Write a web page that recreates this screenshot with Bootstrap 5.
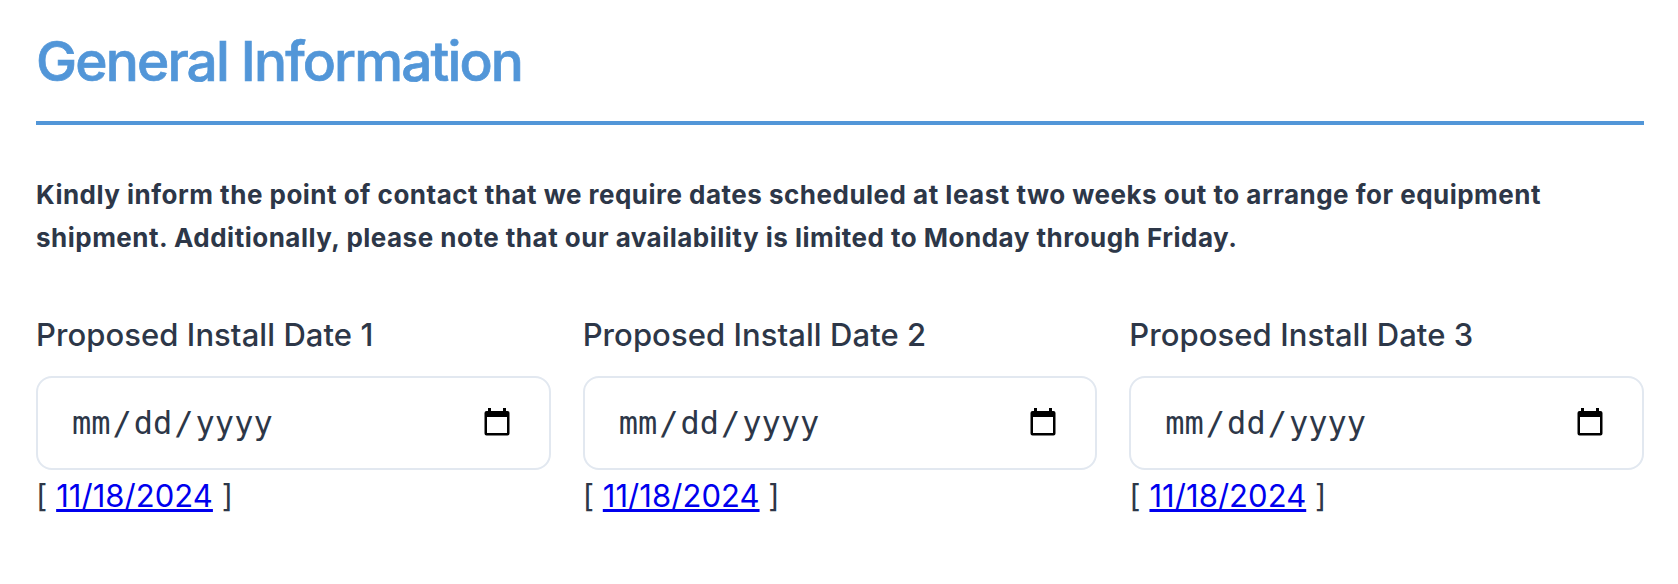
<!DOCTYPE html>
<html lang="en">
<head>
<meta charset="utf-8">
<title>General Information</title>
<link href="https://cdn.jsdelivr.net/npm/bootstrap@5.3.0/dist/css/bootstrap.min.css" rel="stylesheet">
<style>
body{font-family:Inter,sans-serif;color:#2d3748;background:#fff}
.page{padding:30px 34px 0 36px}
h1{font-size:55px;line-height:62px;font-weight:500;-webkit-text-stroke:.7px #5296d8;color:#5296d8;letter-spacing:-1.85px;padding-bottom:29px;border-bottom:4px solid #5296d8}
.notice{font-size:26px;line-height:43px;font-weight:700;letter-spacing:.49px;margin-top:48px}
.dates{margin-top:52px;--bs-gutter-x:32px}
.date-label{font-size:31px;line-height:48px;font-weight:500;letter-spacing:.07px}
.date-box{height:94px;margin-top:17px;border:2px solid #e2e8f0;border-radius:16px;padding:0 39px 0 32px}
.date-box svg{margin-bottom:2px}
.date-mask{font-family:"DejaVu Sans Mono",monospace;font-size:32px;line-height:48px}
.date-mask span{padding:0 2px}
.date-link{font-size:31px;line-height:48px;letter-spacing:.05px;margin-top:2px}
.date-link a{color:#0000ee;text-decoration-thickness:3px}
</style>
</head>
<body>
<main class="page">
  <h1 class="mb-0">General Information</h1>
  <p class="notice mb-0 text-nowrap">Kindly inform the point of contact that we require dates scheduled at least two weeks out to arrange for equipment<br>shipment. Additionally, please note that our availability is limited to Monday through Friday.</p>
  <div class="dates row row-cols-3">
    <div class="col">
      <div class="date-label">Proposed Install Date 1</div>
      <div class="date-box d-flex align-items-center justify-content-between">
        <div class="date-mask"><span>mm</span>/<span>dd</span>/<span>yyyy</span></div>
        <svg width="26" height="28" viewBox="0 0 26 28"><path fill-rule="evenodd" d="M4 0h3v3h12V0h3v3h1.500a2 2 0 0 1 2 2v20.500a2 2 0 0 1-2 2h-21a2 2 0 0 1-2-2V5a2 2 0 0 1 2-2H4zM3 9v16h20V9z"/></svg>
      </div>
      <div class="date-link">[ <a href="#">11/18/2024</a> ]</div>
    </div>
    <div class="col">
      <div class="date-label">Proposed Install Date 2</div>
      <div class="date-box d-flex align-items-center justify-content-between">
        <div class="date-mask"><span>mm</span>/<span>dd</span>/<span>yyyy</span></div>
        <svg width="26" height="28" viewBox="0 0 26 28"><path fill-rule="evenodd" d="M4 0h3v3h12V0h3v3h1.500a2 2 0 0 1 2 2v20.500a2 2 0 0 1-2 2h-21a2 2 0 0 1-2-2V5a2 2 0 0 1 2-2H4zM3 9v16h20V9z"/></svg>
      </div>
      <div class="date-link">[ <a href="#">11/18/2024</a> ]</div>
    </div>
    <div class="col">
      <div class="date-label">Proposed Install Date 3</div>
      <div class="date-box d-flex align-items-center justify-content-between">
        <div class="date-mask"><span>mm</span>/<span>dd</span>/<span>yyyy</span></div>
        <svg width="26" height="28" viewBox="0 0 26 28"><path fill-rule="evenodd" d="M4 0h3v3h12V0h3v3h1.500a2 2 0 0 1 2 2v20.500a2 2 0 0 1-2 2h-21a2 2 0 0 1-2-2V5a2 2 0 0 1 2-2H4zM3 9v16h20V9z"/></svg>
      </div>
      <div class="date-link">[ <a href="#">11/18/2024</a> ]</div>
    </div>
  </div>
</main>
<script src="https://cdn.jsdelivr.net/npm/bootstrap@5.3.0/dist/js/bootstrap.bundle.min.js"></script>
</body>
</html>
